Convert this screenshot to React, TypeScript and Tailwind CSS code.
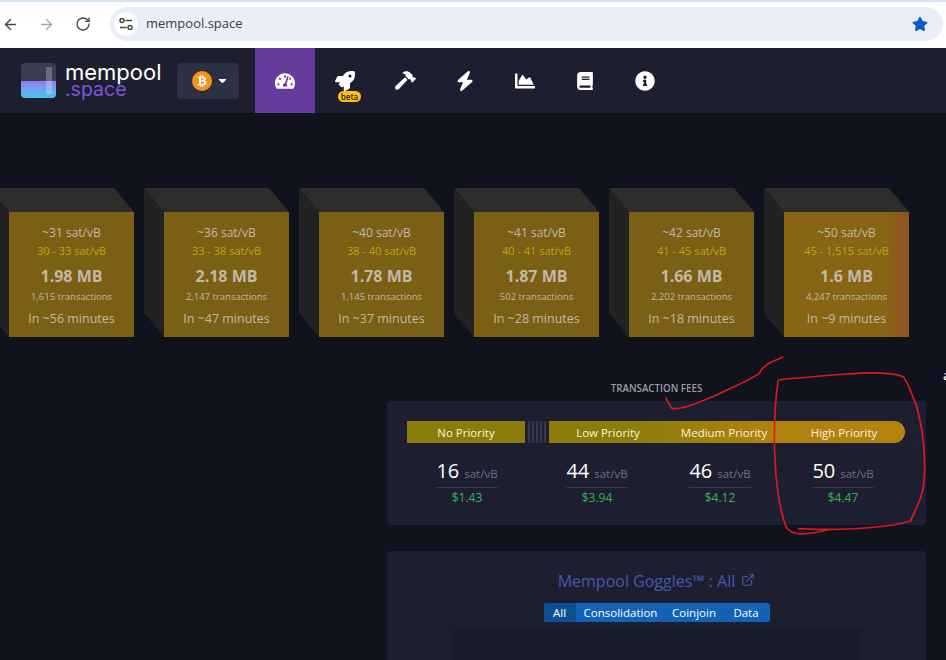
import { ArrowLeft, ArrowRight, RotateCw } from "lucide-react"
import {
  FaBook,
  FaBtc,
  FaCaretDown,
  FaChartArea,
  FaHammer,
  FaInfoCircle,
  FaRocket,
  FaStar,
  FaTachometerAlt,
} from "react-icons/fa"
import { FaBolt } from "react-icons/fa6"
import { FiExternalLink } from "react-icons/fi"

const blocks = [
  { fee: "~31 sat/vB", range: "30 - 33 sat/vB", size: "1.98 MB", txs: "1,615 transactions", eta: "In ~56 minutes" },
  { fee: "~36 sat/vB", range: "33 - 38 sat/vB", size: "2.18 MB", txs: "2,147 transactions", eta: "In ~47 minutes" },
  { fee: "~40 sat/vB", range: "38 - 40 sat/vB", size: "1.78 MB", txs: "1,145 transactions", eta: "In ~37 minutes" },
  { fee: "~41 sat/vB", range: "40 - 41 sat/vB", size: "1.87 MB", txs: "502 transactions", eta: "In ~28 minutes" },
  { fee: "~42 sat/vB", range: "41 - 45 sat/vB", size: "1.66 MB", txs: "2,202 transactions", eta: "In ~18 minutes" },
  { fee: "~50 sat/vB", range: "45 - 1,515 sat/vB", size: "1.6 MB", txs: "4,247 transactions", eta: "In ~9 minutes" },
]

const fees = [
  { value: "16", usd: "$1.43", width: "w-[120px]" },
  { value: "44", usd: "$3.94", width: "w-[140px]" },
  { value: "46", usd: "$4.12", width: "w-[106px]" },
  { value: "50", usd: "$4.47", width: "w-[140px]" },
]

function TuneIcon() {
  return (
    <svg width="14" height="12" viewBox="0 0 14 12" fill="none" stroke="currentColor" strokeWidth="1.5">
      <circle cx="3" cy="2.5" r="2" />
      <path d="M6.5 2.5H13" />
      <circle cx="11" cy="9.5" r="2" />
      <path d="M1 9.5H7.5" />
    </svg>
  )
}

function BrowserBar() {
  return (
    <div className="h-[48px] bg-white border-t-2 border-[#d3e3f3] pb-[2px] flex items-center text-[#474747] shrink-0">
      <div className="w-[110px] flex items-center pl-[2px] gap-[19px]">
        <ArrowLeft size={17} strokeWidth={2} />
        <ArrowRight size={17} strokeWidth={2} className="text-[#a8a8a8]" />
        <RotateCw size={16} strokeWidth={2} className="ml-[1px]" />
      </div>
      <div className="h-[34px] w-[833px] rounded-full bg-[#e9eef8] flex items-center pl-[4px] pr-[15px]">
        <div className="w-[24px] h-[24px] rounded-full bg-white flex items-center justify-center">
          <TuneIcon />
        </div>
        <span className="ml-[8px] text-[13px] text-[#3c4043] font-['Open_Sans',sans-serif] flex-1">mempool.space</span>
        <FaStar size={16} className="text-[#0b57d0]" />
      </div>
    </div>
  )
}

function NavBar() {
  return (
    <div className="h-[65px] bg-[#1d1f31] flex items-center shrink-0">
      <div className="ml-[21px] w-[35px] h-[35px] rounded-[4px] overflow-hidden relative bg-[#3a3c52] shrink-0">
        <div className="absolute left-0 right-0 bottom-0 h-[17px] bg-gradient-to-b from-[#8a7cf2] to-[#3ac7ec]" />
        <div className="absolute left-[25px] top-[4px] w-[6px] h-[27px] bg-white/25" />
      </div>
      <div className="ml-[9px] w-[112px] flex flex-col font-['Inter',sans-serif] -mt-[2px]">
        <span className="text-[22px] text-white leading-[18px]">mempool</span>
        <span className="text-[19.5px] text-[#7d56d8] leading-[16px]">.space</span>
      </div>
      <div className="w-[62px] h-[36px] rounded-[4px] bg-[#2d3042] flex items-center pl-[15px] gap-[4px]">
        <div className="w-[20px] h-[20px] rounded-full bg-[#f7931a] flex items-center justify-center">
          <FaBtc size={12} className="text-white" />
        </div>
        <FaCaretDown size={13} className="text-white" />
      </div>
      <div className="ml-[16px] flex h-full text-white">
        <div className="w-[60px] h-full bg-[#653b9c] flex items-center justify-center">
          <FaTachometerAlt size={20} />
        </div>
        <div className="w-[60px] h-full flex items-center justify-center relative">
          <FaRocket size={20} />
          <span className="absolute left-[23px] top-[43px] w-[23px] h-[11px] rounded-full bg-[#ffc107] text-[#1d1f31] text-[8px] leading-[11px] text-center font-['Open_Sans',sans-serif] font-semibold">
            beta
          </span>
        </div>
        <div className="w-[60px] h-full flex items-center justify-center">
          <FaHammer size={21} />
        </div>
        <div className="w-[60px] h-full flex items-center justify-center">
          <FaBolt size={20} />
        </div>
        <div className="w-[60px] h-full flex items-center justify-center">
          <FaChartArea size={20} />
        </div>
        <div className="w-[60px] h-full flex items-center justify-center">
          <FaBook size={18} />
        </div>
        <div className="w-[60px] h-full flex items-center justify-center">
          <FaInfoCircle size={20} />
        </div>
      </div>
    </div>
  )
}

function Block({ block, last }: { block: (typeof blocks)[number]; last: boolean }) {
  return (
    <div className="relative w-[145px] h-[149px] pl-[20px] pt-[24px] shrink-0">
      <div className="absolute left-0 top-0 w-[145px] h-[24px] bg-[#2f2d2b] [clip-path:polygon(0_0,125px_0,100%_100%,20px_100%)]" />
      <div className="absolute left-0 top-0 w-[20px] h-[149px] bg-[#232222] [clip-path:polygon(0_0,100%_24px,100%_100%,0_125px)]" />
      <div
        className={`w-[125px] h-[125px] flex flex-col items-center pt-[14px] text-[#c0b9a8] ${
          last ? "bg-gradient-to-r from-[#886514] from-80% to-[#8f5321]" : "bg-[#7b5f14]"
        }`}
      >
        <div className="text-[12px] leading-[14px]">{block.fee}</div>
        <div className="text-[11px] leading-[14px] mt-[4px] text-[#b8a80f]">{block.range}</div>
        <div className="text-[16px] leading-[20px] mt-[8px] font-bold">{block.size}</div>
        <div className="text-[9.5px] leading-[12px] mt-[5px]">{block.txs}</div>
        <div className="text-[12.5px] leading-[16px] mt-[8px]">{block.eta}</div>
      </div>
    </div>
  )
}

function FeesCard() {
  return (
    <div className="w-[539px] h-[124px] rounded-[4px] bg-[#1d1f31] pt-[20px] px-[20px]">
      <div className="flex h-[22px] w-[498px] text-[11.5px] leading-[23px] text-[#f8f4de] text-center">
        <div className="w-[118px] bg-[#8a7c06]">No Priority</div>
        <div className="w-[24px] flex justify-center gap-[2px] px-[3px]">
          {[0, 1, 2, 3, 4].map((i) => (
            <div key={i} className="w-[2px] h-full bg-[#34374f]" />
          ))}
        </div>
        <div className="flex-1 flex rounded-r-full bg-gradient-to-r from-[#8a7c06] from-20% via-[#ad820d] via-60% to-[#b5830f]">
          <div className="w-[116px] pl-[2px]">Low Priority</div>
          <div className="w-[118px]">Medium Priority</div>
          <div className="w-[122px]">High Priority</div>
        </div>
      </div>
      <div className="flex mt-[16px] w-[506px]">
        {fees.map((fee) => (
          <div key={fee.value} className={`flex flex-col items-center ${fee.width}`}>
            <div className="w-[62px] pb-[1px] border-b border-[#34374a] text-center whitespace-nowrap leading-[24px]">
              <span className="text-[20px] text-white">{fee.value}</span>
              <span className="ml-[5px] text-[11.5px] text-[#6e7081]">sat/vB</span>
            </div>
            <div className="text-[12px] leading-[16px] mt-[2px] text-[#34b552]">{fee.usd}</div>
          </div>
        ))}
      </div>
    </div>
  )
}

function GogglesCard() {
  return (
    <div className="w-[539px] h-[140px] rounded-[4px] bg-[#1d1f31] pt-[20px] flex flex-col items-center">
      <div className="flex items-center gap-[6px] text-[16px] leading-[20px] text-[#4459ad] font-medium">
        <span>Mempool Goggles™ : All</span>
        <FiExternalLink size={14} className="-mt-[3px]" />
      </div>
      <div className="mt-[12px] flex h-[19px] rounded-[2px] overflow-hidden bg-[#1262b8] text-[11.5px] leading-[19px] text-white">
        <div className="w-[32px] text-center bg-[#0d4f92]">All</div>
        <div className="w-[90px] text-center">Consolidation</div>
        <div className="w-[57px] text-center">Coinjoin</div>
        <div className="w-[47px] text-center">Data</div>
      </div>
      <div className="mt-[6px] w-[411px] flex-1 bg-[#1a1c2d]" />
    </div>
  )
}

function Annotations() {
  return (
    <svg
      className="absolute left-[660px] top-[350px] pointer-events-none"
      width="286"
      height="200"
      viewBox="0 0 858 600"
      fill="none"
      stroke="#d81a1f"
      strokeWidth="5"
      strokeLinecap="round"
      strokeLinejoin="round"
    >
      <path d="M18 145 L35 175 C60 180 100 165 170 135 C220 110 270 90 298 70 C310 45 335 35 368 22" />
      <path d="M416 536 C470 540 600 540 700 525 L752 513 C760 490 785 450 790 410 C800 340 790 240 770 170 C755 130 745 100 730 80 C700 68 650 65 560 72 C480 78 400 85 355 90 C345 150 340 250 345 330 C348 400 360 480 378 530 C395 560 440 555 500 540" />
    </svg>
  )
}

export default function App() {
  return (
    <div className="relative w-[946px] h-[660px] overflow-hidden bg-[#10121e] flex flex-col font-['Open_Sans',sans-serif]">
      <BrowserBar />
      <NavBar />
      <div className="pt-[75px]">
        <div className="flex gap-[10px] -ml-[11px]">
          {blocks.map((block, i) => (
            <Block key={block.range} block={block} last={i === blocks.length - 1} />
          ))}
        </div>
        <div className="mt-[46px] ml-[387px] w-[539px]">
          <div className="text-center text-[9.75px] leading-[12px] font-semibold text-[#9a9ba5] mb-[6px]">TRANSACTION FEES</div>
          <FeesCard />
          <div className="mt-[26px]">
            <GogglesCard />
          </div>
        </div>
      </div>
      <span className="absolute left-[943px] top-[366px] text-[13px] font-semibold text-white">a</span>
      <Annotations />
    </div>
  )
}
